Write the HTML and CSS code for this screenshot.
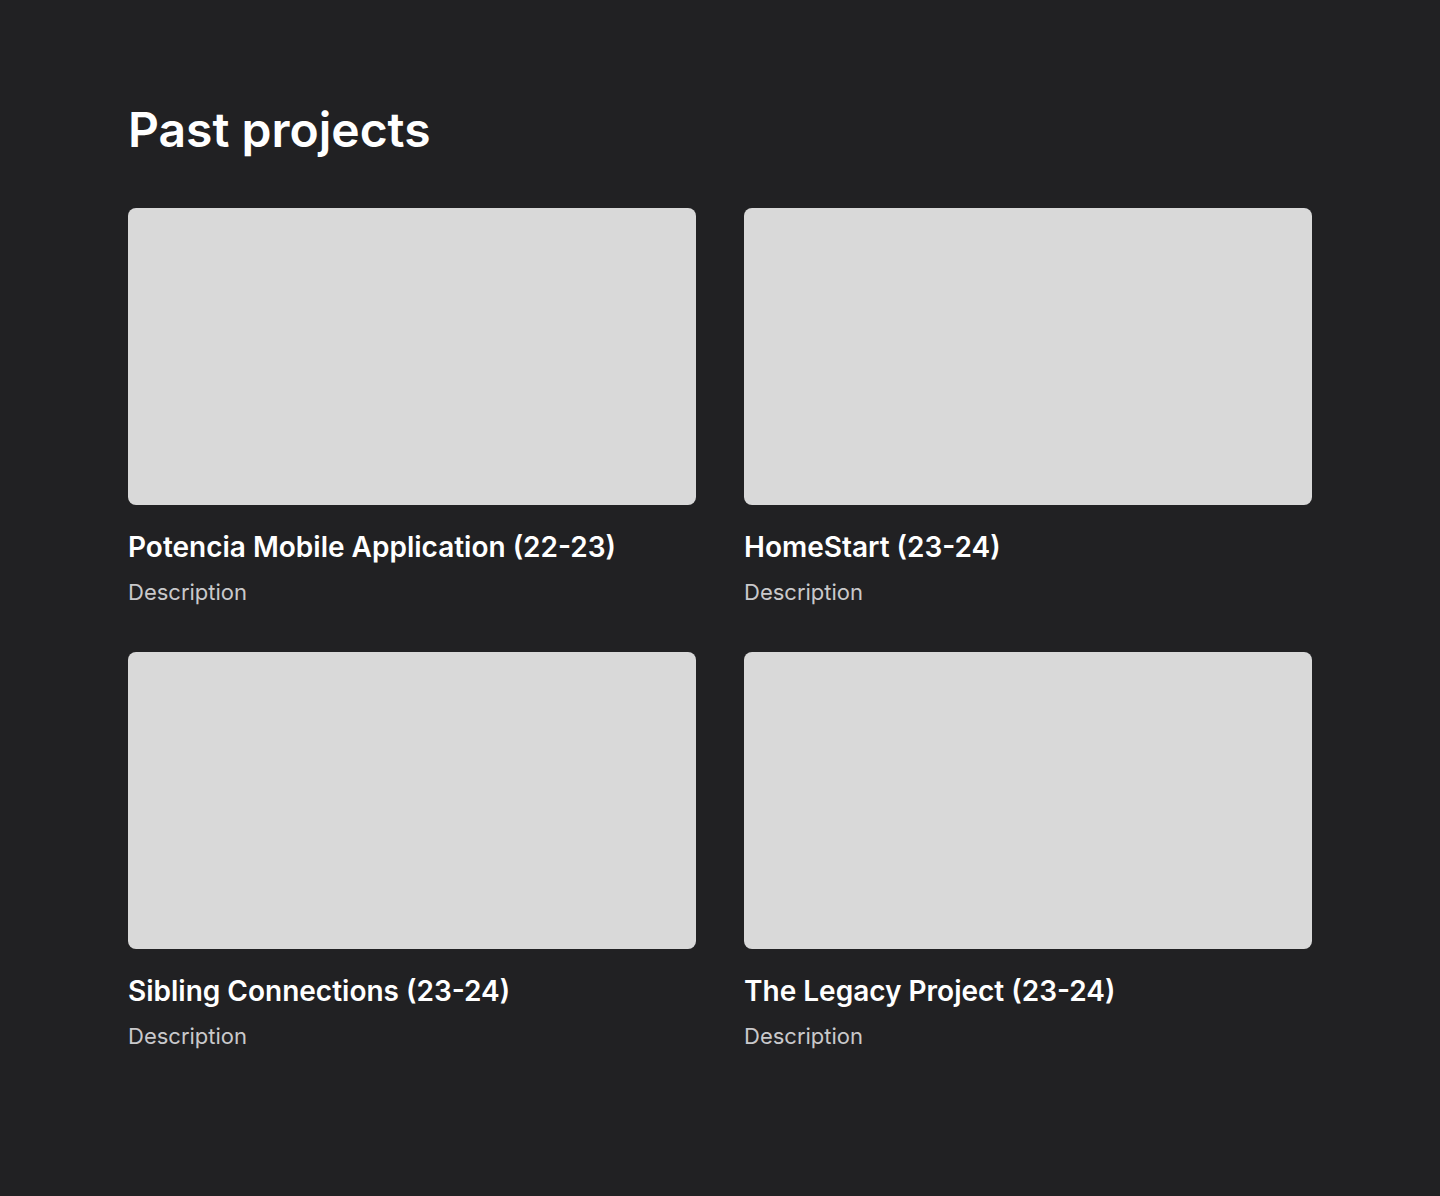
FILE: index.html
```html
<!DOCTYPE html>
<html lang="en">
<head>
    <meta charset="UTF-8">
    <meta name="viewport" content="width=device-width, initial-scale=1.0">
    <title>Past projects</title>
    <link rel="stylesheet" href="styles.css">
</head>
<body>
    <main class="container">
        <h1 class="header">Past projects</h1>
        <div class="projects">
            <div class="project">
                <div class="thumb"></div>
                <h2 class="title">Potencia Mobile Application (22-23)</h2>
                <p class="desc">Description</p>
            </div>
            <div class="project">
                <div class="thumb"></div>
                <h2 class="title">HomeStart (23-24)</h2>
                <p class="desc">Description</p>
            </div>
            <div class="project">
                <div class="thumb"></div>
                <h2 class="title">Sibling Connections (23-24)</h2>
                <p class="desc">Description</p>
            </div>
            <div class="project">
                <div class="thumb"></div>
                <h2 class="title">The Legacy Project (23-24)</h2>
                <p class="desc">Description</p>
            </div>
        </div>
    </main>
</body>
</html>
```

FILE: styles.css
```css
body {
    margin: 0;
    background-color: #212123;
    font-family: Inter, "Noto Sans", sans-serif;
    color: #ffffff;
}

.container {
    padding: 98px 128px 96px;
}

.header {
    margin: 0 0 46px;
    font-size: 48px;
    font-weight: 600;
    line-height: 64px;
}

.projects {
    display: grid;
    grid-template-columns: 1fr 1fr;
    column-gap: 48px;
    row-gap: 44px;
}

.thumb {
    height: 297px;
    background-color: #d9d9d9;
    border-radius: 8px;
}

.title {
    margin: 24px 0 0;
    font-size: 28px;
    font-weight: 600;
    line-height: 36px;
}

.desc {
    margin: 11px 0 0;
    font-size: 22px;
    line-height: 32px;
    color: #c9c9cb;
}
```
